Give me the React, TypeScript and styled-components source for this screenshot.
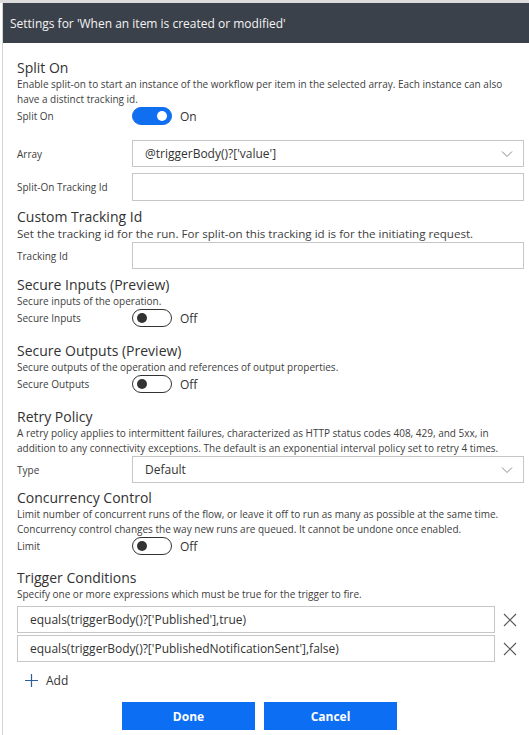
import { useState } from 'react';
import styled, { createGlobalStyle } from 'styled-components';

const GlobalStyle = createGlobalStyle`
    html, body {
        margin: 0;
        padding: 0;
        background: #ffffff;
    }
    body {
        font-family: 'Open Sans', 'Noto Sans', sans-serif;
        color: #333333;
    }
`;

const Page = styled.div`
    width: 529px;
    height: 735px;
    padding-left: 2px;
    box-sizing: border-box;
    border-top: 3px solid #dcdcdc;
    overflow: hidden;
`;

const Panel = styled.div`
    height: 100%;
    border-left: 1px solid #d4d4d4;
    display: flex;
    flex-direction: column;
`;

const Header = styled.div`
    height: 40px;
    background-color: #3b414a;
    color: #f4f4f4;
    font-size: 12px;
    display: flex;
    align-items: center;
    padding-left: 7px;
    flex-shrink: 0;
`;

const Body = styled.div`
    padding: 16px 5px 0 14px;
    display: flex;
    flex-direction: column;
`;

const Section = styled.div<{ $gap?: number }>`
    display: flex;
    flex-direction: column;
    margin-top: ${(p) => p.$gap ?? 0}px;
`;

const SectionTitle = styled.div`
    font-size: 14px;
    line-height: 18px;
    color: #323232;
`;

const SectionText = styled.div<{ $size?: number }>`
    font-size: ${(p) => p.$size ?? 10}px;
    line-height: 15px;
    color: #404040;
`;

const FieldRow = styled.div<{ $gap?: number }>`
    display: grid;
    grid-template-columns: 115px 1fr;
    align-items: center;
    margin-top: ${(p) => p.$gap ?? 0}px;
`;

const FieldLabel = styled.div`
    font-size: 10px;
    color: #404040;
`;

const TextBox = styled.div<{ $height?: number }>`
    height: ${(p) => p.$height ?? 27}px;
    box-sizing: border-box;
    border: 1px solid #c6c6c6;
    display: flex;
    align-items: center;
    padding: 0 10px 0 12px;
    font-size: 12px;
    color: #333333;
    background: #ffffff;
`;

const SelectValue = styled.span`
    flex: 1;
`;

const ToggleWrap = styled.div`
    display: flex;
    align-items: center;
    gap: 8px;
    font-size: 12px;
    color: #333333;
    cursor: pointer;
`;

const Track = styled.div<{ $on: boolean }>`
    width: 40px;
    height: 18px;
    box-sizing: border-box;
    border-radius: 9px;
    border: 1px solid ${(p) => (p.$on ? '#106ff0' : '#333333')};
    background: ${(p) => (p.$on ? '#106ff0' : '#ffffff')};
    display: flex;
    align-items: center;
    justify-content: ${(p) => (p.$on ? 'flex-end' : 'flex-start')};
    padding: 0 4px;
`;

const Knob = styled.div<{ $on: boolean }>`
    width: 10px;
    height: 10px;
    border-radius: 50%;
    background: ${(p) => (p.$on ? '#ffffff' : '#333333')};
`;

const ConditionRow = styled.div<{ $gap?: number }>`
    display: flex;
    align-items: center;
    margin-top: ${(p) => p.$gap ?? 0}px;
`;

const ConditionBox = styled(TextBox)`
    width: 478px;
    flex-shrink: 0;
`;

const RemoveButton = styled.button`
    border: none;
    background: none;
    padding: 0;
    margin-left: 7px;
    width: 16px;
    height: 16px;
    display: flex;
    align-items: center;
    justify-content: center;
    cursor: pointer;
`;

const AddLink = styled.div`
    display: flex;
    align-items: center;
    gap: 8px;
    margin-top: 9px;
    padding-left: 8px;
    height: 18px;
    font-size: 12px;
    color: #333333;
`;

const ButtonBar = styled.div`
    display: flex;
    gap: 9px;
    padding-left: 105px;
    margin-top: 13px;
`;

const PrimaryButton = styled.button`
    width: 133px;
    height: 28px;
    border: none;
    background: #0b6ef3;
    color: #ffffff;
    font-family: 'Open Sans', 'Noto Sans', sans-serif;
    font-weight: 700;
    font-size: 12px;
    cursor: pointer;
`;

const Chevron = () => (
    <svg width="12" height="8" viewBox="0 0 12 8">
        <path d="M1 1.5 L6 6.5 L11 1.5" fill="none" stroke="#8a8a8a" strokeWidth="1" />
    </svg>
);

const Cross = () => (
    <svg width="14" height="14" viewBox="0 0 14 14">
        <path d="M1 1 L13 13 M13 1 L1 13" stroke="#555555" strokeWidth="1.1" />
    </svg>
);

const Plus = () => (
    <svg width="13" height="13" viewBox="0 0 13 13">
        <path d="M6.5 0 V13 M0 6.5 H13" stroke="#2d5e9c" strokeWidth="1.2" />
    </svg>
);

type ToggleProps = {
    on: boolean;
    onChange: (value: boolean) => void;
};

const Toggle = ({ on, onChange }: ToggleProps) => (
    <ToggleWrap onClick={() => onChange(!on)}>
        <Track $on={on}>
            <Knob $on={on} />
        </Track>
        <span>{on ? 'On' : 'Off'}</span>
    </ToggleWrap>
);

const App = () => {
    const [splitOn, setSplitOn] = useState(true);
    const [secureIn, setSecureIn] = useState(false);
    const [secureOut, setSecureOut] = useState(false);
    const [limit, setLimit] = useState(false);
    const conditions = [
        "equals(triggerBody()?['Published'],true)",
        "equals(triggerBody()?['PublishedNotificationSent'],false)",
    ];

    return (
        <Page>
            <GlobalStyle />
            <Panel>
                <Header>Settings for 'When an item is created or modified'</Header>
                <Body>
                    <Section>
                        <SectionTitle>Split On</SectionTitle>
                        <SectionText>
                            Enable split-on to start an instance of the workflow per item in the selected array. Each
                            instance can also have a distinct tracking id.
                        </SectionText>
                        <FieldRow>
                            <FieldLabel>Split On</FieldLabel>
                            <Toggle on={splitOn} onChange={setSplitOn} />
                        </FieldRow>
                        <FieldRow $gap={15}>
                            <FieldLabel>Array</FieldLabel>
                            <TextBox>
                                <SelectValue>@triggerBody()?['value']</SelectValue>
                                <Chevron />
                            </TextBox>
                        </FieldRow>
                        <FieldRow $gap={6}>
                            <FieldLabel>Split-On Tracking Id</FieldLabel>
                            <TextBox $height={28} />
                        </FieldRow>
                    </Section>

                    <Section $gap={7}>
                        <SectionTitle>Custom Tracking Id</SectionTitle>
                        <SectionText $size={11.6}>
                            Set the tracking id for the run. For split-on this tracking id is for the initiating request.
                        </SectionText>
                        <FieldRow $gap={1}>
                            <FieldLabel>Tracking Id</FieldLabel>
                            <TextBox />
                        </FieldRow>
                    </Section>

                    <Section $gap={7}>
                        <SectionTitle>Secure Inputs (Preview)</SectionTitle>
                        <SectionText>Secure inputs of the operation.</SectionText>
                        <FieldRow>
                            <FieldLabel>Secure Inputs</FieldLabel>
                            <Toggle on={secureIn} onChange={setSecureIn} />
                        </FieldRow>
                    </Section>

                    <Section $gap={15}>
                        <SectionTitle>Secure Outputs (Preview)</SectionTitle>
                        <SectionText>Secure outputs of the operation and references of output properties.</SectionText>
                        <FieldRow>
                            <FieldLabel>Secure Outputs</FieldLabel>
                            <Toggle on={secureOut} onChange={setSecureOut} />
                        </FieldRow>
                    </Section>

                    <Section $gap={15}>
                        <SectionTitle>Retry Policy</SectionTitle>
                        <SectionText>
                            A retry policy applies to intermittent failures, characterized as HTTP status codes 408,
                            429, and 5xx, in addition to any connectivity exceptions. The default is an exponential
                            interval policy set to retry 4 times.
                        </SectionText>
                        <FieldRow>
                            <FieldLabel>Type</FieldLabel>
                            <TextBox>
                                <SelectValue>Default</SelectValue>
                                <Chevron />
                            </TextBox>
                        </FieldRow>
                    </Section>

                    <Section $gap={6}>
                        <SectionTitle>Concurrency Control</SectionTitle>
                        <SectionText>
                            Limit number of concurrent runs of the flow, or leave it off to run as many as possible at
                            the same time. Concurrency control changes the way new runs are queued. It cannot be undone
                            once enabled.
                        </SectionText>
                        <FieldRow>
                            <FieldLabel>Limit</FieldLabel>
                            <Toggle on={limit} onChange={setLimit} />
                        </FieldRow>
                    </Section>

                    <Section $gap={14}>
                        <SectionTitle>Trigger Conditions</SectionTitle>
                        <SectionText>Specify one or more expressions which must be true for the trigger to fire.</SectionText>
                        {conditions.map((c, i) => (
                            <ConditionRow key={c} $gap={i === 0 ? 4 : 2}>
                                <ConditionBox>{c}</ConditionBox>
                                <RemoveButton aria-label="Remove condition">
                                    <Cross />
                                </RemoveButton>
                            </ConditionRow>
                        ))}
                        <AddLink>
                            <Plus />
                            <span>Add</span>
                        </AddLink>
                    </Section>

                    <ButtonBar>
                        <PrimaryButton>Done</PrimaryButton>
                        <PrimaryButton>Cancel</PrimaryButton>
                    </ButtonBar>
                </Body>
            </Panel>
        </Page>
    );
};

export default App;
